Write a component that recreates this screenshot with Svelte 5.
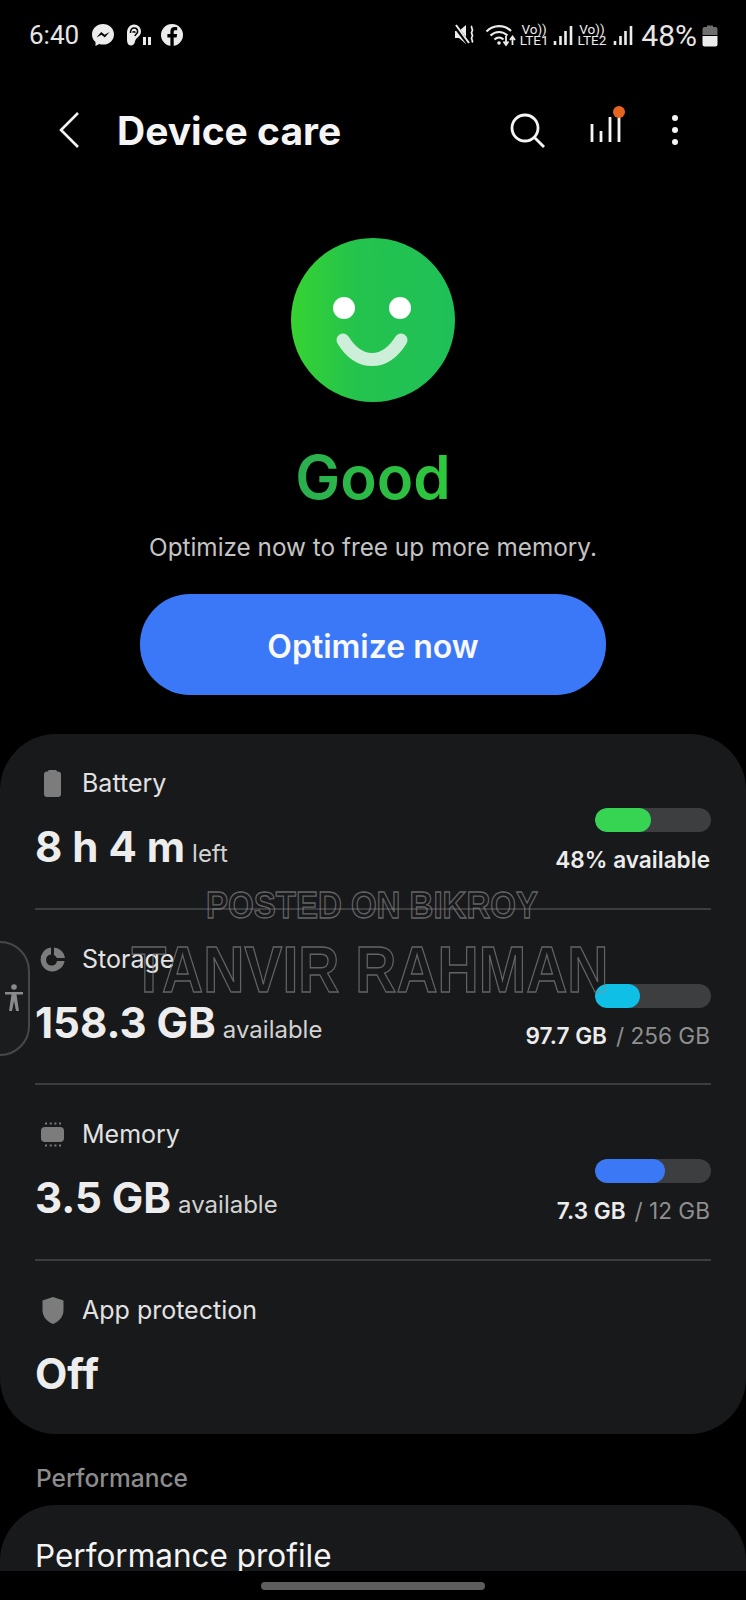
<script>
  const rows = [
    { id: "battery", label: "Battery", value: "8 h 4 m", unit: "left", pct: 48, color: "#37d353", strong: "48% available", rest: "" },
    { id: "storage", label: "Storage", value: "158.3 GB", unit: "available", pct: 39, color: "#0fbfe6", strong: "97.7 GB", rest: "/ 256 GB" },
    { id: "memory", label: "Memory", value: "3.5 GB", unit: "available", pct: 60, color: "#3b78f6", strong: "7.3 GB", rest: "/ 12 GB" },
    { id: "shield", label: "App protection", value: "Off", unit: "", pct: null },
  ];
</script>

<div class="page">
  <main class="screen">
    <div class="status">
      <div class="status-left">
        <span class="clock">6:40</span>
        <svg width="26" height="26" viewBox="0 0 26 26">
          <path d="M13 2C6.900 2 2 6.500 2 12.400c0 3.100 1.300 5.700 3.500 7.600v4l3.600-2c1.200.4 2.500.6 3.900.6 6.100 0 11-4.500 11-10.200S19.100 2 13 2z" fill="#ececec" />
          <path d="M6.500 15.500l4.700-5.400 3.400 2.700 5-2.900-4.800 5.500-3.300-2.700z" fill="#000" />
        </svg>
        <svg width="30" height="26" viewBox="0 0 30 26">
          <path d="M4 11c0-5 3-8.500 7-8.500s7 3 7 7c0 5-5 5.500-6 10-.5 2.500-2 4-4 4-3 0-4-3-4-6z" fill="#ececec" />
          <path d="M7.500 11c0-3 1.500-5 3.700-5s3.400 1.700 3.400 3.700c0 2-2.200 2.300-2.700 4.300M9.800 10.600c.3-1.200 2.300-1.200 2.300.2" fill="none" stroke="#000" stroke-width="1.500" />
          <rect x="20" y="15" width="3" height="8" fill="#ececec" /><rect x="25" y="15" width="3" height="8" fill="#ececec" />
        </svg>
        <svg width="24" height="24" viewBox="0 0 24 24">
          <circle cx="12" cy="12" r="11" fill="#ececec" />
          <path d="M13.700 23v-8.600h2.900l.5-3.400h-3.400V8.900c0-1 .4-1.700 1.800-1.700h1.700V4.200c-.6-.1-1.500-.2-2.500-.2-2.600 0-4.300 1.500-4.300 4.400V11H7.400v3.400h3v8.600z" fill="#000" />
        </svg>
      </div>
      <div class="status-right">
        <svg width="24" height="26" viewBox="0 0 24 26">
          <path d="M1 9h4l7-6v19l-7-6H1z" fill="#ececec" />
          <path d="M1 4l13 17" stroke="#000" stroke-width="4" /><path d="M2 3l13 18" stroke="#ececec" stroke-width="2" />
          <path d="M18 4c-2 2 2 3 0 5.500s2 3 0 5.500 2 3 0 5.500" fill="none" stroke="#ececec" stroke-width="1.800" />
        </svg>
        <svg class="wifi" width="32" height="26" viewBox="0 0 32 26">
          <path d="M1.500 9.500C8.500 2.500 19.500 2.500 26 9M5.500 13.500c5-4.700 12-4.700 17 0M9.500 17.500c2.700-2.500 6.300-2.500 9 0" fill="none" stroke="#ececec" stroke-width="2.200" />
          <circle cx="14" cy="21" r="1.800" fill="#ececec" />
          <path d="M21 14v8M18.500 19.500l2.500 3.500 2.500-3.500M27.500 23v-8M25 18l2.500-3.500L30 18" fill="none" stroke="#ececec" stroke-width="1.800" />
        </svg>
        <span class="lte"><span>Vo))</span><span>LTE1</span></span>
        <svg class="first-signal" width="20" height="21" viewBox="0 0 20 21"><path d="M2 16v4M7.500 11v9M12.500 6v14M18 1v19" stroke="#ececec" stroke-width="2.600" /></svg>
        <span class="lte second-sim"><span>Vo))</span><span>LTE2</span></span>
        <svg width="20" height="21" viewBox="0 0 20 21"><path d="M2 16v4M7.500 11v9M12.500 6v14M18 1v19" stroke="#ececec" stroke-width="2.600" /></svg>
        <span class="percent">48%</span>
        <svg width="16" height="23" viewBox="0 0 16 23">
          <path d="M5 1.500h6V3h2.500A2 2 0 0 1 15.500 5v6H.5V5a2 2 0 0 1 2-2H5z" fill="#6e6e6e" />
          <path d="M.5 12h15v8.500a2 2 0 0 1-2 2h-11a2 2 0 0 1-2-2z" fill="#ececec" />
        </svg>
      </div>
    </div>

    <header class="appbar">
      <svg class="back" width="22" height="38" viewBox="0 0 22 38"><path d="M20 2L3 19l17 17" fill="none" stroke="#f2f2f2" stroke-width="2.600" /></svg>
      <h1>Device care</h1>
      <div class="actions">
        <svg class="search" width="36" height="36" viewBox="0 0 36 36">
          <circle cx="16" cy="16" r="13" fill="none" stroke="#f5f5f5" stroke-width="2.800" />
          <path d="M25 25L35 35" stroke="#f5f5f5" stroke-width="2.800" />
        </svg>
        <svg class="stats" width="38" height="42" viewBox="0 0 38 42">
          <path d="M3 19v18M12 26v11M21 12v25M30 6v31" stroke="#f5f5f5" stroke-width="2.800" />
          <circle cx="30" cy="7" r="6" fill="#e5641f" />
        </svg>
        <svg width="10" height="34" viewBox="0 0 10 34">
          <circle cx="5" cy="5" r="3" fill="#f5f5f5" /><circle cx="5" cy="17" r="3" fill="#f5f5f5" /><circle cx="5" cy="29" r="3" fill="#f5f5f5" />
        </svg>
      </div>
    </header>

    <section class="hero">
      <div class="face">
        <svg width="164" height="164" viewBox="0 0 164 164">
          <circle cx="53" cy="70" r="11" fill="#fff" /><circle cx="109" cy="70" r="11" fill="#fff" />
          <path d="M52 102c16 26 42 26 58 0" fill="none" stroke="#cdeed8" stroke-width="13" stroke-linecap="round" />
        </svg>
      </div>
      <div class="good">Good</div>
      <p>Optimize now to free up more memory.</p>
      <button type="button">Optimize now</button>
    </section>

    <section class="card">
      {#each rows as row}
        <div class="row">
          <div class="left">
            <div class="label">
              <svg width="36" height="32" viewBox="0 0 36 32">
                {#if row.id === "battery"}
                  <path d="M13 4.500c0-.8.600-1.500 1.500-1.500h6c.9 0 1.500.7 1.500 1.500h1a3 3 0 0 1 3 3V27a3 3 0 0 1-3 3H12a3 3 0 0 1-3-3V7.500a3 3 0 0 1 3-3z" fill="#7c7c7c" />
                {:else if row.id === "storage"}
                  <path d="M16 4.500A12 12 0 1 0 29.500 18H22a5.500 5.500 0 1 1-6-6.500z" fill="#7c7c7c" />
                  <path d="M19 4.500A12 12 0 0 1 30 15h-8.200a5.500 5.500 0 0 0-2.800-3z" fill="#7c7c7c" />
                {:else if row.id === "memory"}
                  <rect x="6" y="9" width="23" height="15" rx="4" fill="#7c7c7c" />
                  <path d="M10 5.500h16M10 27.500h16" stroke="#7c7c7c" stroke-width="2" stroke-dasharray="2 2.700" />
                {:else}
                  <path d="M18 3l10.500 3.500V16c0 7-4.500 11.500-10.500 14C12 27.500 7.500 23 7.500 16V6.500z" fill="#7c7c7c" />
                {/if}
              </svg>
              <span>{row.label}</span>
            </div>
            <div class="value"><strong>{row.value}</strong>{#if row.unit}<span>{row.unit}</span>{/if}</div>
          </div>
          {#if row.pct !== null}
            <div class="right">
              <div class="track"><div class="fill" style="width: {row.pct}%; background: {row.color}"></div></div>
              <div class="usage"><b>{row.strong}</b>{#if row.rest}<span>{row.rest}</span>{/if}</div>
            </div>
          {/if}
        </div>
      {/each}
    </section>

    <div class="section-title">Performance</div>
    <section class="card second">
      <div class="profile">Performance profile</div>
    </section>
  </main>

  <div class="navbar"><div class="pill"></div></div>

  <!-- stuff that sits on top of the page -->
  <div class="watermark">
    <div class="wm-small">POSTED ON BIKROY</div>
    <div class="wm-big">TANVIR RAHMAN</div>
  </div>
  <div class="edge-tab">
    <svg width="20" height="30" viewBox="0 0 20 30">
      <circle cx="10" cy="3" r="2.800" fill="#8a8a8a" />
      <path d="M1 8h18v2.400h-6.500L15 27h-3l-2-10-2 10H5l2.500-16.600H1z" fill="#8a8a8a" />
    </svg>
  </div>
</div>

<style>
  :global(body) {
    background: #000;
  }

  .page {
    position: relative;
    width: 746px;
    height: 1600px;
    overflow: hidden;
    background: #000;
    font-family: Inter, "Noto Sans", sans-serif;
    color: #f0f0f0;
  }

  .screen {
    height: 1571px;
    overflow: hidden;
  }

  .status {
    display: flex;
    justify-content: space-between;
    align-items: center;
    height: 26px;
    padding: 22px 28px 0 29px;
  }

  .status-left,
  .status-right {
    display: flex;
    align-items: center;
  }

  .status-left {
    gap: 7px;
  }

  .clock {
    font-family: Roboto, sans-serif;
    font-size: 26px;
    color: #e6e6e6;
    margin-right: 4px;
  }

  .status-right {
    gap: 7px;
  }

  .wifi {
    margin-right: -4px;
  }

  .lte {
    display: flex;
    flex-direction: column;
    align-items: center;
    font-family: Roboto, sans-serif;
    font-size: 13.500px;
    line-height: 11px;
    color: #ececec;
  }

  .first-signal {
    margin-left: -3px;
  }

  .second-sim {
    margin-left: -2px;
  }

  .percent {
    font-family: Roboto, sans-serif;
    font-size: 30px;
    color: #e6e6e6;
    margin: 0 -2px 0 1px;
  }

  .appbar {
    display: flex;
    align-items: center;
    height: 60px;
    margin-top: 52px;
    padding-left: 58px;
  }

  .back {
    margin-right: 37px;
  }

  h1 {
    margin: 0;
    font-size: 39px;
    font-weight: 700;
    color: #f5f5f5;
  }

  .actions {
    display: flex;
    align-items: center;
    margin-left: auto;
    margin-right: 66px;
    gap: 43px;
  }

  .search {
    margin-right: -3px;
  }

  .stats {
    margin-top: -8px;
    margin-left: 4px;
  }

  .hero {
    display: flex;
    flex-direction: column;
    align-items: center;
    padding-top: 78px;
  }

  .face {
    width: 164px;
    height: 164px;
    border-radius: 50%;
    background: linear-gradient(90deg, #36d332 0%, #24c34d 40%, #1fc058 100%);
  }

  .face svg {
    display: block;
  }

  .good {
    margin-top: 39px;
    font-size: 60px;
    line-height: 72px;
    font-weight: 600;
    background: linear-gradient(90deg, #2aae50, #2dc93a);
    -webkit-background-clip: text;
    background-clip: text;
    color: transparent;
  }

  .hero p {
    margin: 18px 0 0;
    font-size: 24.300px;
    line-height: 32px;
    color: #c4c4c4;
  }

  .hero button {
    width: 466px;
    height: 101px;
    margin-top: 31px;
    padding-top: 4px;
    border: none;
    border-radius: 50px;
    background: #3a78f8;
    color: #f8f8f8;
    font-family: inherit;
    font-size: 32px;
    font-weight: 600;
  }

  .card {
    margin-top: 39px;
    border-radius: 56px;
    background: #18191b;
    padding: 0 35px;
  }

  .row {
    box-sizing: border-box;
    display: flex;
    justify-content: space-between;
    height: 175.500px;
    border-bottom: 2px solid #3c3d3f;
  }

  .row:last-child {
    height: 173px;
    border-bottom: none;
  }

  .label {
    display: flex;
    align-items: center;
    gap: 11px;
    height: 32px;
    margin-top: 33px;
    font-size: 25px;
    color: #e2e2e2;
  }

  .value {
    margin-top: 22px;
    display: flex;
    align-items: baseline;
    gap: 7px;
    line-height: 52px;
  }

  .value strong {
    font-size: 42px;
    font-weight: 700;
    color: #ededed;
  }

  .value span {
    font-size: 24px;
    color: #d2d2d2;
  }

  .right {
    display: flex;
    flex-direction: column;
    align-items: flex-end;
    padding-top: 74px;
  }

  .track {
    width: 116px;
    height: 24px;
    border-radius: 12px;
    background: #3d3e40;
    overflow: hidden;
  }

  .fill {
    height: 100%;
    border-radius: 12px;
  }

  .usage {
    display: flex;
    gap: 9px;
    margin-top: 13px;
    padding-right: 1px;
    font-size: 22.600px;
    line-height: 30px;
  }

  .usage b {
    font-weight: 600;
    color: #ececec;
  }

  .usage span {
    color: #8f8f8f;
  }

  .section-title {
    padding: 29px 36px 0;
    font-size: 24.500px;
    line-height: 30px;
    font-weight: 500;
    color: #8c8c8c;
  }

  .card.second {
    margin-top: 12px;
    height: 120px;
  }

  .profile {
    padding-top: 31px;
    font-size: 31.500px;
    line-height: 40px;
    color: #f4f4f4;
  }

  .navbar {
    display: flex;
    justify-content: center;
    padding-top: 11px;
  }

  .pill {
    width: 224px;
    height: 8px;
    border-radius: 4px;
    background: #5e5e5e;
  }

  .watermark {
    position: absolute;
    left: 0;
    top: 881px;
    width: 100%;
    text-align: center;
    font-family: "Liberation Sans", sans-serif;
    font-weight: 700;
    color: transparent;
    -webkit-text-stroke: 1.200px rgba(140, 140, 140, 0.65);
    pointer-events: none;
  }

  .wm-small {
    font-size: 33px;
    line-height: 50px;
    transform: translateX(-1px) scaleY(1.130);
  }

  .wm-big {
    margin-top: 3px;
    font-size: 57px;
    line-height: 70px;
    transform: translateX(-3px) scaleY(1.130);
  }

  .edge-tab {
    position: absolute;
    left: -2px;
    top: 941px;
    width: 32px;
    height: 115px;
    display: flex;
    align-items: center;
    justify-content: center;
    box-sizing: border-box;
    border: 2px solid #48484a;
    border-radius: 0 30px 30px 0;
    background: rgba(30, 30, 32, 0.6);
  }
</style>
